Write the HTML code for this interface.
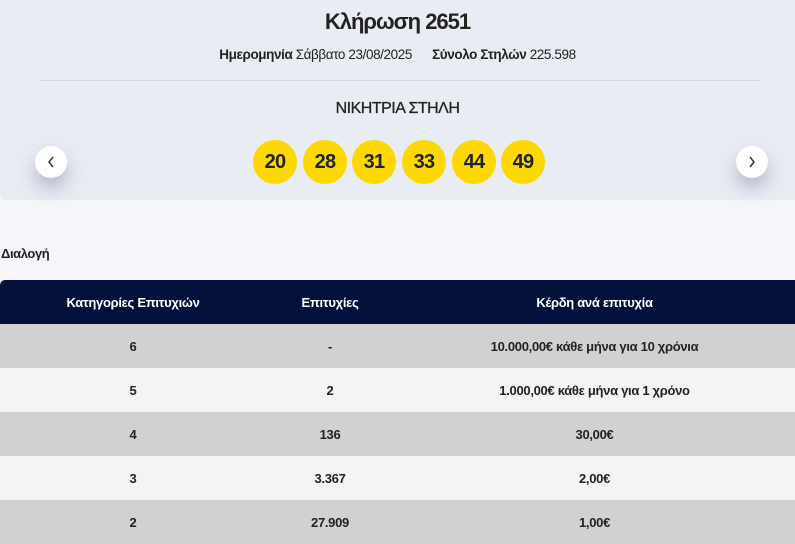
<!DOCTYPE html>
<html><head><meta charset="utf-8"><style>
*{margin:0;padding:0;box-sizing:border-box}
body{width:795px;height:541px;overflow:hidden;background:#f5f6f9;font-family:"Liberation Sans",sans-serif;color:#222;position:relative}
.top{position:absolute;left:0;top:0;width:795px;height:200px;background:#e9ecf3;border-radius:0 0 0 6px}
.title{position:absolute;top:9px;width:100%;text-align:center;font-size:22px;font-weight:bold;letter-spacing:-1px}
.meta{position:absolute;top:47px;width:100%;text-align:center;font-size:13.5px;letter-spacing:-0.4px}
.meta b{font-weight:bold}
.line{position:absolute;left:41px;top:80px;width:720px;height:1px;background:#d3d6de}
.win{position:absolute;top:100px;width:100%;text-align:center;font-size:16px;letter-spacing:-0.5px;color:#222;-webkit-text-stroke:0.3px #222}
.ball{position:absolute;top:140px;width:44px;height:44px;border-radius:50%;background:#fdd900;font-size:20px;font-weight:bold;text-align:center;line-height:44px;letter-spacing:-0.8px;color:#222}
.arr{position:absolute;top:146px;width:32px;height:32px;border-radius:50%;background:#fff;box-shadow:0 10px 18px rgba(80,90,120,.35)}
.arr svg{position:absolute;left:11px;top:10px}
.dia{position:absolute;left:1px;top:246px;font-size:13px;font-weight:bold;letter-spacing:-0.4px}
table{position:absolute;left:0;top:280px;width:795px;border-collapse:collapse;font-size:13px;font-weight:bold;letter-spacing:-0.3px}
th,td{height:44px;text-align:center;padding:0}
th{background:#03103a;color:#fff}
tr.g td{background:#d0d1d3}
tr.l td{background:#f4f4f6}
thead tr th:first-child{border-top-left-radius:5px}
</style></head><body>
<div class="top"></div>
<div class="title">Κλήρωση 2651</div>
<div class="meta"><b>Ημερομηνία</b> Σάββατο 23/08/2025 &nbsp; &nbsp; &nbsp;<b>Σύνολο Στηλών</b> 225.598</div>
<div class="line"></div>
<div class="win">ΝΙΚΗΤΡΙΑ ΣΤΗΛΗ</div>
<div class="ball" style="left:253px">20</div>
<div class="ball" style="left:303px">28</div>
<div class="ball" style="left:352px">31</div>
<div class="ball" style="left:402px">33</div>
<div class="ball" style="left:452px">44</div>
<div class="ball" style="left:501px">49</div>
<div class="arr" style="left:35px"><svg width="10" height="12" viewBox="0 0 10 12"><path d="M7 1 L3 6 L7 11" fill="none" stroke="#333" stroke-width="1.5"/></svg></div>
<div class="arr" style="left:736px"><svg width="10" height="12" viewBox="0 0 10 12"><path d="M3 1 L7 6 L3 11" fill="none" stroke="#333" stroke-width="1.5"/></svg></div>
<div class="dia">Διαλογή</div>
<table>
<thead><tr><th style="width:266px">Κατηγορίες Επιτυχιών</th><th style="width:128px">Επιτυχίες</th><th>Κέρδη ανά επιτυχία</th></tr></thead>
<tbody>
<tr class="g"><td>6</td><td>-</td><td>10.000,00€ κάθε μήνα για 10 χρόνια</td></tr>
<tr class="l"><td>5</td><td>2</td><td>1.000,00€ κάθε μήνα για 1 χρόνο</td></tr>
<tr class="g"><td>4</td><td>136</td><td>30,00€</td></tr>
<tr class="l"><td>3</td><td>3.367</td><td>2,00€</td></tr>
<tr class="g"><td>2</td><td>27.909</td><td>1,00€</td></tr>
</tbody></table>
</body></html>
